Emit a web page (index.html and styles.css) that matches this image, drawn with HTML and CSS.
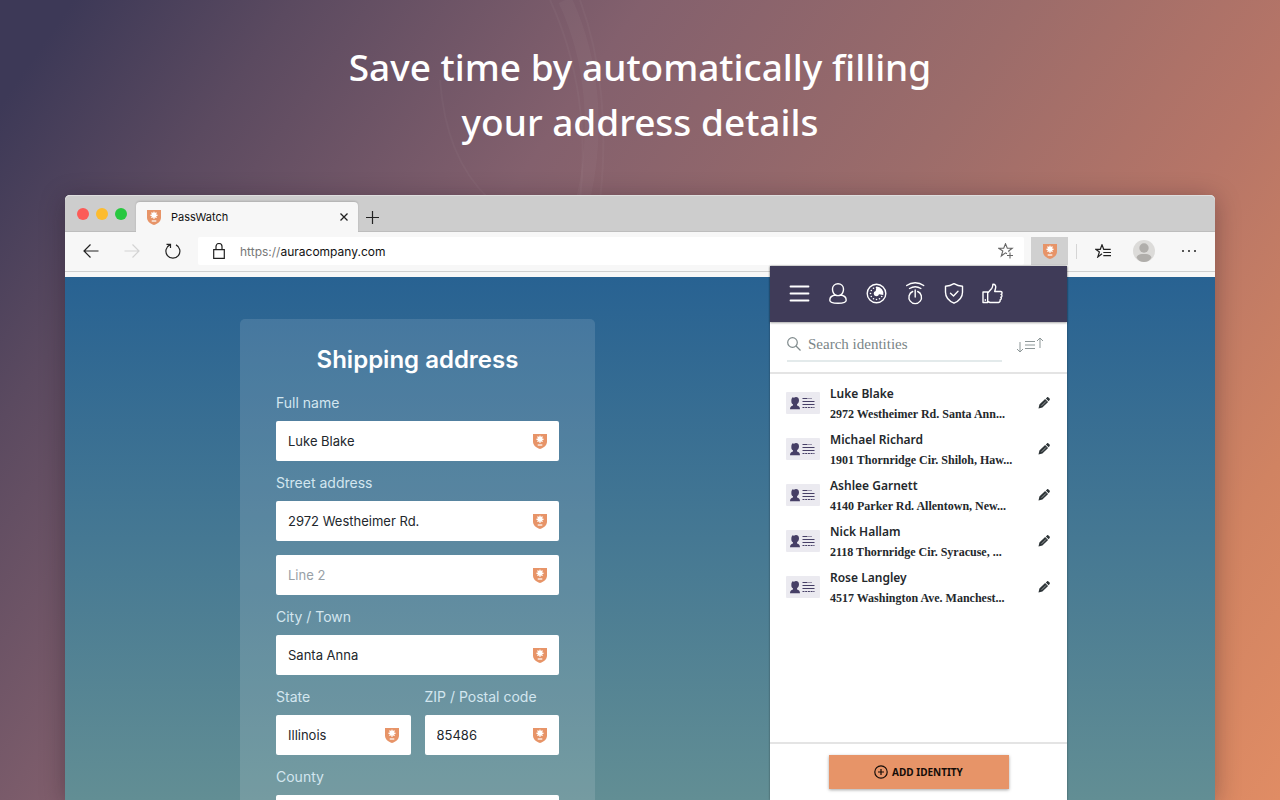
FILE: index.html
```html
<!DOCTYPE html>
<html lang="en">
<head>
<meta charset="utf-8">
<meta name="viewport" content="width=device-width, initial-scale=1">
<title>PassWatch</title>
<link rel="stylesheet" href="styles.css">
</head>
<body>
<svg class="sprite" aria-hidden="true">
  <symbol id="shield" viewBox="0 0 14 15">
    <path fill="#e79468" d="M0 0h14v7.500c0 3.800-3 6.300-7 7.500-4-1.200-7-3.700-7-7.500z"/>
    <path stroke="#fff" stroke-width="1.400" stroke-linecap="round" d="M7 2.200v6M4 5.200h6M4.900 3.100l4.200 4.200M9.100 3.100L4.900 7.300"/>
    <circle cx="7" cy="5.200" r="2.200" fill="#fff"/>
    <path stroke="#fff" stroke-width="1.200" d="M4.700 11h4.600"/>
  </symbol>
  <symbol id="id-card" viewBox="0 0 34 22">
    <rect width="34" height="22" rx="1" fill="#ebeaf0"/>
    <path fill="#463f66" d="M5.500 7l1-1.800 1.500.5c2-1.500 5-.5 5 2.500 0 2-.8 3-2 4l.3 1.500c1.500.3 2.700 1.300 2.700 3.500H4c0-2.200 1.200-3.200 2.700-3.500l.3-1.500C5.500 12 5 10 5.500 7z"/>
    <path fill="none" stroke="#463f66" d="M16.500 6.500h5m1 0h1m1 0h1M16.500 9.500h12M16.500 12.500h12"/>
    <path fill="none" stroke="#463f66" stroke-dasharray="2 .7" d="M16.500 15.500h12"/>
  </symbol>
  <symbol id="pencil" viewBox="0 0 12 12">
    <path fill="#2e3538" d="M.5 11.500l.9-3.900 5.700-5.600 3 3-5.700 5.600zM7.800 1.500L9 .4c.5-.5 1-.4 1.400 0L11.600 1.600c.4.4.4.9 0 1.300L10.700 4.200z"/>
    <path stroke="#fff" stroke-width=".5" d="M3.600 8.800l4.500-4.500"/>
  </symbol>
</svg>

<svg class="swirl" viewBox="0 0 400 200" fill="none" stroke="#fff" aria-hidden="true">
  <path stroke-opacity=".03" stroke-width="14" d="M165 0c28 60 34 130 18 200"/>
  <path stroke-opacity=".03" stroke-width="2" d="M150 0c28 60 38 130 30 200M180 0c22 60 28 130 20 200M40 80c4 50 18 90 50 120"/>
</svg>

<h1 class="headline">Save time by automatically filling<br>your address details</h1>

<main class="window">
  <header class="titlebar">
    <div class="lights"><span class="light red"></span><span class="light amber"></span><span class="light green"></span></div>
    <div class="tab">
      <svg class="shield"><use href="#shield"/></svg>
      <span class="tab-title">PassWatch</span>
      <button class="plain tab-close" aria-label="Close tab"><svg width="8" height="8" viewBox="0 0 8 8" stroke="#222" stroke-width="1.300"><path d="M.5.5l7 7M7.500.5l-7 7"/></svg></button>
    </div>
    <button class="plain new-tab" aria-label="New tab"><svg width="13" height="13" viewBox="0 0 13 13" stroke="#222" stroke-width="1.200"><path d="M6.500 0v13M0 6.500h13"/></svg></button>
  </header>

  <div class="toolbar">
    <button class="plain tool" aria-label="Back"><svg width="16" height="14" viewBox="0 0 16 14" fill="none" stroke="#222" stroke-width="1.200"><path d="M15.500 7H1M7.500.5L1 7l6.500 6.500"/></svg></button>
    <button class="plain tool" aria-label="Forward"><svg width="16" height="14" viewBox="0 0 16 14" fill="none" stroke="#d3d3d3" stroke-width="1.200"><path d="M.5 7H15M8.500.5L15 7l-6.500 6.500"/></svg></button>
    <button class="plain tool" aria-label="Reload"><svg width="16" height="16" viewBox="0 0 16 16" fill="none" stroke="#222" stroke-width="1.200"><path d="M4.800 1.900A7 7 0 1 0 11 1.900M1.500 1.300h4V5"/></svg></button>
    <div class="address">
      <svg width="12" height="16" viewBox="0 0 12 16" fill="none" stroke="#222" stroke-width="1.200"><path d="M.7 6.600h10.600v8.700H.7zM3 6.600V3.500a3 3 0 0 1 6 0v3.100"/></svg>
      <span class="url"><span class="scheme">https://</span>auracompany.com</span>
      <button class="plain" aria-label="Add to favourites"><svg width="16" height="16" viewBox="0 0 16 16" fill="none" stroke="#666" stroke-width="1.100"><path d="M9 10.700L7.500 9.800 3.300 13l1.500-5L.8 5.300h4.900l1.800-4.500 1.800 4.500h4.900l-3.500 2.700.3 1M12 9.500v6M9 12.500h6"/></svg></button>
    </div>
    <button class="plain extension" aria-label="PassWatch"><svg class="shield"><use href="#shield"/></svg></button>
    <span class="divider"></span>
    <button class="plain tool" aria-label="Favourites"><svg width="16" height="14" viewBox="0 0 16 14" fill="none" stroke="#222" stroke-width="1.200"><path d="M7 9.800L2.800 13l1.600-5L.8 5.300h4.500L7 .8l1.700 4.500h7M8.300 8.500H16M8.300 11.700H16"/></svg></button>
    <button class="plain tool profile" aria-label="Profile"><svg width="22" height="22" viewBox="0 0 22 22"><circle cx="11" cy="11" r="11" fill="#dcdbd9"/><circle cx="11" cy="8" r="4.700" fill="#b0aeab"/><path fill="#b0aeab" d="M3.500 17.500c1-3 4-3.500 7.500-3.500s6.500.5 7.500 3.500C17 20.500 14 22 11 22s-6-1.500-7.500-4.500z"/></svg></button>
    <button class="plain tool more" aria-label="More"><svg width="14" height="2" viewBox="0 0 14 2" fill="#222"><circle cx="1" cy="1" r="1"/><circle cx="7" cy="1" r="1"/><circle cx="13" cy="1" r="1"/></svg></button>
  </div>

  <section class="site">
    <form class="card">
      <h2 class="card-title">Shipping address</h2>
      <div class="field"><label for="name">Full name</label>
        <div class="control"><input id="name" type="text" value="Luke Blake"><svg class="shield"><use href="#shield"/></svg></div></div>
      <div class="field"><label for="street">Street address</label>
        <div class="control"><input id="street" type="text" value="2972 Westheimer Rd."><svg class="shield"><use href="#shield"/></svg></div></div>
      <div class="control"><input type="text" aria-label="Line 2" placeholder="Line 2"><svg class="shield"><use href="#shield"/></svg></div>
      <div class="field"><label for="city">City / Town</label>
        <div class="control"><input id="city" type="text" value="Santa Anna"><svg class="shield"><use href="#shield"/></svg></div></div>
      <div class="pair">
        <div class="field"><label for="state">State</label>
          <div class="control"><input id="state" type="text" value="Illinois"><svg class="shield"><use href="#shield"/></svg></div></div>
        <div class="field"><label for="zip">ZIP / Postal code</label>
          <div class="control"><input id="zip" type="text" value="85486"><svg class="shield"><use href="#shield"/></svg></div></div>
      </div>
      <div class="field"><label for="county">County</label>
        <div class="control"><input id="county" type="text"><svg class="shield"><use href="#shield"/></svg></div></div>
    </form>
  </section>

  <aside class="popup">
    <nav class="popup-nav">
      <button class="plain" aria-label="Menu"><svg viewBox="0 0 24 24"><path stroke-width="1.800" d="M3.500 5.500h18M3.500 12.500h18M3.500 19.500h18"/></svg></button>
      <button class="plain" aria-label="Identities"><svg viewBox="0 0 24 24"><path d="M9.500 14C7 12.500 6.500 10.500 6.500 8 6.500 4.800 9 2.700 12 2.700s5.500 2.100 5.500 5.300c0 2.500-.5 4.500-3 6 3.500.4 5.700 2.200 5.700 5.200 0 2-3.400 3-8.200 3s-8.200-1-8.200-3c0-3 2.200-4.800 5.700-5.200 1.500.7 3.500.7 5 0"/></svg></button>
      <button class="plain" aria-label="Password age"><svg viewBox="0 0 24 24"><circle cx="11.500" cy="12.500" r="9.300"/><g fill="#fff" stroke="none"><circle cx="11.500" cy="6.500" r=".8"/><circle cx="8.500" cy="7.300" r=".8"/><circle cx="6.300" cy="9.500" r=".8"/><circle cx="5.500" cy="12.500" r=".8"/><circle cx="6.300" cy="15.500" r=".8"/><circle cx="8.500" cy="17.700" r=".8"/><circle cx="11.500" cy="18.500" r=".8"/><circle cx="14.500" cy="17.700" r=".8"/><circle cx="16.700" cy="15.500" r=".8"/><path d="M11.500 5.500a7 7 0 0 1 6.800 8.500l-4.300-.8a2.700 2.700 0 1 1-3.300-3.200z"/></g></svg></button>
      <button class="plain" aria-label="One-touch login"><svg viewBox="0 0 24 24"><path d="M2.700 4.500c5-3.600 12-3.600 17 0M5.500 7.500c3.500-2.200 7.900-2.200 11.400 0M8.700 10.500a6.300 6.300 0 1 0 5 0M11.200 9v7"/></svg></button>
      <button class="plain" aria-label="Security"><svg viewBox="0 0 24 24"><path d="M11 2.700c2.700 1.700 5.300 2.500 8.500 2.500v6c0 5.500-3.500 8.700-8.500 11-5-2.300-8.500-5.500-8.500-11v-6c3.200 0 5.800-.8 8.500-2.500zM7.500 12.200l3 2.700 4.500-4.700"/></svg></button>
      <button class="plain" aria-label="Feedback"><svg viewBox="0 0 24 24"><path d="M1 11h4.700v10.500H1zM5.700 12l4-4.500c1-1.200 1-2.700 1.200-4.200 2.300-.2 3.400 1.800 2.600 4.200l-.8 3h6c1.800.2 1.800 2.500.3 2.900 1.500.5 1.200 2.700-.2 2.900 1 .8.500 2.400-.8 2.600.5 1.500-.3 2.300-1.500 2.600H8l-2.300-1M3.300 18.700v.6"/></svg></button>
    </nav>
    <div class="search">
      <label class="search-box">
        <svg width="14" height="14" viewBox="0 0 14 14" fill="none" stroke="#7f8a8c" stroke-width="1.200"><circle cx="5.500" cy="5.500" r="4.800"/><path d="M9 9l4.500 4.500"/></svg>
        <input type="text" aria-label="Search identities" placeholder="Search identities">
      </label>
      <button class="plain" aria-label="Sort"><svg width="28" height="16" viewBox="0 0 28 16" fill="none" stroke="#8d9798"><path d="M4 5v10M1 12l3 3 3-3M9 4.500h10M9 8h10M9 11.500h10M24 11V1M21 4l3-3 3 3"/></svg></button>
    </div>
    <ul class="identities">
      <li><svg class="id-card"><use href="#id-card"/></svg><div class="who"><strong>Luke Blake</strong><span>2972 Westheimer Rd. Santa Ann...</span></div><button class="plain" aria-label="Edit Luke Blake"><svg class="pencil"><use href="#pencil"/></svg></button></li>
      <li><svg class="id-card"><use href="#id-card"/></svg><div class="who"><strong>Michael Richard</strong><span>1901 Thornridge Cir. Shiloh, Haw...</span></div><button class="plain" aria-label="Edit Michael Richard"><svg class="pencil"><use href="#pencil"/></svg></button></li>
      <li><svg class="id-card"><use href="#id-card"/></svg><div class="who"><strong>Ashlee Garnett</strong><span>4140 Parker Rd. Allentown, New...</span></div><button class="plain" aria-label="Edit Ashlee Garnett"><svg class="pencil"><use href="#pencil"/></svg></button></li>
      <li><svg class="id-card"><use href="#id-card"/></svg><div class="who"><strong>Nick Hallam</strong><span>2118 Thornridge Cir. Syracuse, ...</span></div><button class="plain" aria-label="Edit Nick Hallam"><svg class="pencil"><use href="#pencil"/></svg></button></li>
      <li><svg class="id-card"><use href="#id-card"/></svg><div class="who"><strong>Rose Langley</strong><span>4517 Washington Ave. Manchest...</span></div><button class="plain" aria-label="Edit Rose Langley"><svg class="pencil"><use href="#pencil"/></svg></button></li>
    </ul>
    <footer class="popup-foot">
      <button class="add"><svg width="14" height="14" viewBox="0 0 14 14" fill="none" stroke="#150d08" stroke-width="1.200"><circle cx="7" cy="7" r="6.200"/><path d="M7 4v6M4 7h6"/></svg>ADD IDENTITY</button>
    </footer>
  </aside>
</main>
</body>
</html>
```
FILE: styles.css
```css
* { box-sizing: border-box; }

body {
  margin: 0;
  height: 100vh;
  overflow: hidden;
  display: flex;
  flex-direction: column;
  padding: 0 65px;
  font-family: Inter, "Liberation Sans", sans-serif;
  background: linear-gradient(125deg, #3d3957 4%, #5b4a60 16%, #83606d 35%, #9c6c6a 56%, #b67567 72%, #d08362 87%, #e08c64 100%);
}

h1, h2, ul { margin: 0; padding: 0; }
svg { display: block; flex: none; }
input { font: inherit; min-width: 0; border: 0; outline: 0; background: none; padding: 0; }

.sprite { position: absolute; width: 0; height: 0; }
.swirl { position: absolute; top: 0; left: 400px; width: 400px; height: 200px; }
.plain { display: flex; align-items: center; justify-content: center; padding: 0; border: 0; background: none; }
.shield { width: 14px; height: 15px; }

.headline {
  position: relative;
  flex: none;
  padding: 39px 0 41px;
  margin-bottom: 5px;
  color: #fff;
  font-family: "Noto Sans", sans-serif;
  font-size: 37px;
  font-weight: 500;
  line-height: 55px;
  text-align: center;
}

.window {
  position: relative;
  flex: 1;
  min-height: 0;
  display: flex;
  flex-direction: column;
  border-radius: 5px 5px 0 0;
  background: #f7f7f7;
  box-shadow: 0 4px 24px rgba(30, 15, 30, .35);
}

.titlebar {
  flex: none;
  display: flex;
  align-items: flex-end;
  height: 37px;
  padding-left: 12px;
  border-radius: 5px 5px 0 0;
  background: #cdcdcd;
  box-shadow: inset 0 1px #dedede, inset 0 -1px #bdbdbd;
}
.lights { display: flex; gap: 7px; width: 59px; padding-bottom: 12px; }
.light { width: 12px; height: 12px; border-radius: 50%; }
.red { background: #fc5b57; }
.amber { background: #fdbc2e; }
.green { background: #28c840; }
.tab {
  display: flex;
  align-items: center;
  width: 222px;
  height: 30px;
  padding: 0 10px 0 11px;
  border-radius: 4px 4px 0 0;
  background: #f7f7f7;
  box-shadow: 0 -1px 2px rgba(0, 0, 0, .15);
}
.tab-title { flex: 1; margin-left: 10px; font-size: 11px; color: #111; }
.new-tab { height: 30px; margin-left: 8px; }

.toolbar {
  flex: none;
  display: flex;
  align-items: center;
  height: 40px;
  padding: 0 14px 1px;
  border-bottom: 1px solid #cfcfcf;
  background: #f7f7f7;
}
.tool { width: 24px; height: 24px; margin-right: 17px; }
.address {
  flex: 1;
  display: flex;
  align-items: center;
  height: 28px;
  padding: 0 10px 0 15px;
  margin-right: 7px;
  background: #fff;
  border-radius: 2px;
}
.tool + .address { margin-left: -4px; }
.url { flex: 1; margin-left: 15px; font-size: 12px; color: #111; }
.scheme { color: #777; }
.extension { width: 37px; height: 28px; background: #d0d0d0; }
.divider { width: 1px; height: 15px; margin: 0 14px 0 8px; background: #d5d5d5; }
.profile { margin-right: 21px; }
.more { margin-right: 0; }

.site {
  flex: 1;
  min-height: 0;
  overflow: hidden;
  margin-top: 5px;
  padding: 42px 0 0 175px;
  background: linear-gradient(#286292, #628e94 100%);
}
.card {
  display: flex;
  flex-direction: column;
  gap: 14px;
  width: 355px;
  padding: 26px 36px;
  border-radius: 5px;
  background: rgba(255, 255, 255, .12);
}
.card-title { margin-bottom: 6px; font-size: 24px; font-weight: 600; line-height: 30px; color: #fff; text-align: center; }
.field { display: flex; flex-direction: column; gap: 10px; min-width: 0; }
.field label { font-size: 14px; line-height: 16px; color: #d3e6ef; }
.pair { display: grid; grid-template-columns: 1fr 1fr; gap: 14px; }
.control {
  display: flex;
  align-items: center;
  height: 40px;
  padding: 0 12px;
  border-radius: 2px;
  background: #fff;
  font-size: 13px;
  color: #22272c;
}
.control input { flex: 1; color: inherit; }
.control input::placeholder { color: #98a0a6; opacity: 1; }

.popup {
  position: absolute;
  top: 71px;
  right: 148px;
  bottom: 0;
  width: 297px;
  display: flex;
  flex-direction: column;
  background: #fff;
  box-shadow: 0 0 2px rgba(0, 0, 0, .4);
}
.popup-nav { flex: none; display: flex; gap: 15px; padding: 15px 17px 17px; background: #3f3b58; box-shadow: 0 1px 2px rgba(0, 0, 0, .35); }
.popup-nav svg { width: 24px; height: 24px; fill: none; stroke: #fff; stroke-width: 1.400; stroke-linejoin: round; stroke-linecap: round; }
.search {
  display: flex;
  justify-content: space-between;
  height: 52px;
  padding: 6px 23px 10px 17px;
  border-bottom: 2px solid #e4e4e4;
}
.search-box { display: flex; align-items: center; gap: 7px; width: 215px; border-bottom: 2px solid #e3eaeb; font: 15px "Liberation Serif", serif; }
.search-box input { flex: 1; color: #444; }
.search-box input::placeholder { color: #7a8587; opacity: 1; }

.identities { flex: 1; list-style: none; padding-top: 6px; }
.identities li { display: flex; align-items: center; height: 46px; padding: 0 17px 0 16px; }
.id-card { width: 34px; height: 22px; }
.who { flex: 1; min-width: 0; margin-left: 10px; padding-top: 2px; color: #24282c; }
.who strong, .who span { display: block; white-space: nowrap; }
.who strong { font: 600 12px/20px "Noto Sans", sans-serif; }
.who span { font: 600 12px/20px "Liberation Serif", serif; }
.pencil { width: 12px; height: 12px; }

.popup-foot { display: flex; justify-content: center; padding: 11px 0; border-top: 2px solid #e4e4e4; }
.add {
  display: flex;
  align-items: center;
  justify-content: center;
  gap: 4px;
  width: 180px;
  height: 34px;
  border: 0;
  padding: 0;
  background: #e79468;
  box-shadow: 0 1px 3px rgba(0, 0, 0, .35);
  font: 700 10px "Noto Sans", sans-serif;
  color: #150d08;
}
```
